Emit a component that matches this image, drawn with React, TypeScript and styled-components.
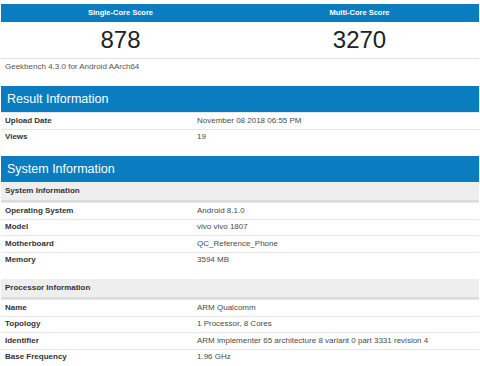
import * as React from 'react';
import styled, { createGlobalStyle } from 'styled-components';

const blue = '#0a7dc1';

const GlobalStyle = createGlobalStyle`
  html, body {
    margin: 0;
    padding: 0;
    background: #fff;
  }
  body {
    font-family: "Liberation Sans", Arial, sans-serif;
    color: #333;
  }
`;

const Page = styled.div`
  padding: 4px 1px 0 1px;
  width: 478px;
`;

/* score table */
const ScoreGrid = styled.div`
  display: grid;
  grid-template-columns: 1fr 1fr;
  border-bottom: 1px solid #e2e2e2;
`;

const ScoreName = styled.div`
  height: 18px;
  line-height: 18px;
  background: ${blue};
  color: #fff;
  font-size: 7.5px;
  font-weight: bold;
  text-align: center;
`;

const ScoreValue = styled.div`
  height: 36px;
  line-height: 36px;
  font-size: 24px;
  color: #222;
  text-align: center;
`;

const Caption = styled.div`
  padding: 3px 4px 0;
  height: 10px;
  line-height: 10px;
  font-size: 8px;
  color: #555;
  margin-bottom: 14px;
`;

/* sections */
const Section = styled.section<{ gap?: number }>`
  margin-bottom: ${p => p.gap ?? 11}px;
`;

const SectionTitle = styled.h2`
  margin: 0;
  height: 26px;
  line-height: 26px;
  padding: 0 6px;
  background: ${blue};
  color: #fff;
  font-size: 12.5px;
  font-weight: normal;
`;

const GroupTitle = styled.div`
  height: 18px;
  line-height: 18px;
  padding: 0 4px;
  background: #eeeeee;
  border-bottom: 2px solid #dcdcdc;
  font-size: 8px;
  font-weight: bold;
  color: #333;
`;

const Group = styled.div<{ gap?: number }>`
  margin-bottom: ${p => p.gap ?? 0}px;
`;

const Row = styled.div`
  display: grid;
  grid-template-columns: 196px 1fr;
  height: 16.5px;
  box-sizing: border-box;
  border-top: 1px solid #e6e6e6;
  align-items: center;
  font-size: 8px;
  line-height: 10px;
`;

const Label = styled.div`
  padding-left: 4px;
  font-weight: bold;
  color: #333;
`;

const Value = styled.div`
  color: #4a4a4a;
`;

type Pair = [string, string];

const InfoRows = ({ rows }: { rows: Pair[] }) => (
  <>
    {rows.map(([k, v]) => (
      <Row key={k}>
        <Label>{k}</Label>
        <Value>{v}</Value>
      </Row>
    ))}
  </>
);

const resultRows: Pair[] = [
  ['Upload Date', 'November 08 2018 06:55 PM'],
  ['Views', '19'],
];

const systemRows: Pair[] = [
  ['Operating System', 'Android 8.1.0'],
  ['Model', 'vivo vivo 1807'],
  ['Motherboard', 'QC_Reference_Phone'],
  ['Memory', '3594 MB'],
];

const processorRows: Pair[] = [
  ['Name', 'ARM Qualcomm'],
  ['Topology', '1 Processor, 8 Cores'],
  ['Identifier', 'ARM implementer 65 architecture 8 variant 0 part 3331 revision 4'],
  ['Base Frequency', '1.96 GHz'],
];

export default function App() {
  return (
    <Page>
      <GlobalStyle />
      <ScoreGrid>
        <ScoreName>Single-Core Score</ScoreName>
        <ScoreName>Multi-Core Score</ScoreName>
        <ScoreValue>878</ScoreValue>
        <ScoreValue>3270</ScoreValue>
      </ScoreGrid>
      <Caption>Geekbench 4.3.0 for Android AArch64</Caption>

      <Section>
        <SectionTitle>Result Information</SectionTitle>
        <InfoRows rows={resultRows} />
      </Section>

      <Section gap={0}>
        <SectionTitle>System Information</SectionTitle>
        <Group gap={11}>
          <GroupTitle>System Information</GroupTitle>
          <InfoRows rows={systemRows} />
        </Group>
        <Group>
          <GroupTitle>Processor Information</GroupTitle>
          <InfoRows rows={processorRows} />
        </Group>
      </Section>
    </Page>
  );
}
